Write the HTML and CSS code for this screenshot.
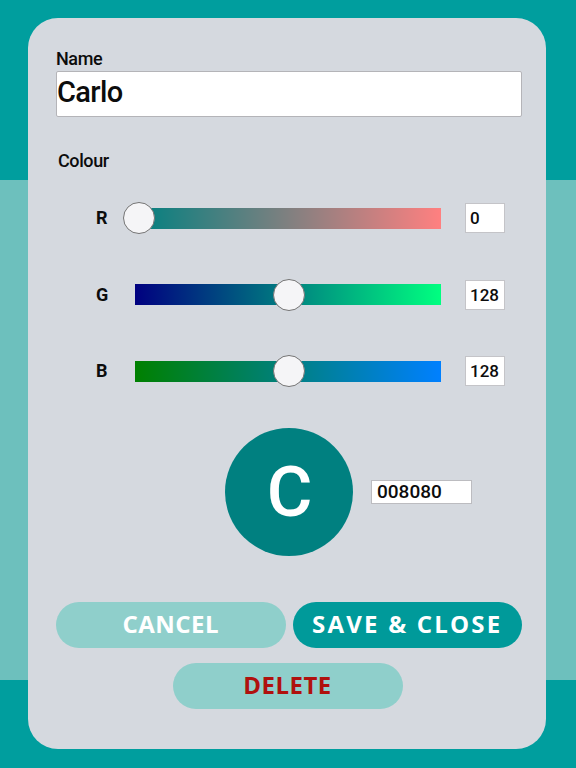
FILE: index.html
```html
<!DOCTYPE html>
<html>
<head>
<meta charset="utf-8">
<link rel="stylesheet" href="styles.css">
</head>
<body>
<div class="card">
  <div class="field-label">Name</div>
  <div class="name-input">Carlo</div>
  <div class="section-label">Colour</div>
  <div class="sliders">
    <div class="slider-row">
      <div class="ch-label">R</div>
      <div class="track track-r"><div class="thumb" style="left: 4px"></div></div>
      <div class="num-box">0</div>
    </div>
    <div class="slider-row">
      <div class="ch-label">G</div>
      <div class="track track-g"><div class="thumb" style="left: 153.6px"></div></div>
      <div class="num-box">128</div>
    </div>
    <div class="slider-row">
      <div class="ch-label">B</div>
      <div class="track track-b"><div class="thumb" style="left: 153.6px"></div></div>
      <div class="num-box">128</div>
    </div>
  </div>
  <div class="preview">
    <div class="swatch">C</div>
    <div class="hex-box">008080</div>
  </div>
  <div class="actions">
    <div class="btn btn-light">CANCEL</div>
    <div class="btn btn-dark">SAVE &amp; CLOSE</div>
  </div>
  <div class="delete-row">
    <div class="btn btn-light btn-delete">DELETE</div>
  </div>
</div>
</body>
</html>
```

FILE: styles.css
```css
html, body {
  margin: 0;
  padding: 0;
}
body {
  width: 576px;
  height: 768px;
  overflow: hidden;
  background: linear-gradient(to bottom, #009e9e 0, #009e9e 180px, #6dc0bd 180px, #6dc0bd 680px, #009e9e 680px, #009e9e 768px);
  font-family: Roboto, "Liberation Sans", sans-serif;
  color: #0c0c0c;
}
.card {
  box-sizing: border-box;
  width: 518px;
  margin: 18px 0 0 28px;
  padding: 31px 24px 40px 28px;
  background: #d5d9df;
  border-radius: 30px;
  display: flex;
  flex-direction: column;
}
.field-label,
.section-label {
  font-size: 18px;
  line-height: 20px;
  font-weight: 500;
  letter-spacing: -0.4px;
}
.section-label {
  margin-top: 34px;
  padding-left: 2px;
}
.name-input {
  box-sizing: border-box;
  margin-top: 2px;
  height: 46px;
  background: #fff;
  border: 1px solid #b4b4b8;
  border-radius: 2px;
  font-size: 29px;
  font-weight: 500;
  line-height: 40px;
  letter-spacing: -0.6px;
  padding: 0 0 4px 0;
}
.sliders {
  margin-top: 31px;
  display: flex;
  flex-direction: column;
  gap: 44.5px;
}
.slider-row {
  display: grid;
  grid-template-columns: 79px 306px 40px;
  align-items: center;
  height: 32px;
}
.ch-label {
  font-size: 18px;
  font-weight: 700;
  padding-left: 40px;
  line-height: 20px;
}
.track {
  position: relative;
  height: 21px;
}
.track-r { background: linear-gradient(to right, #008080, #ff8080); }
.track-g { background: linear-gradient(to right, #000080, #00ff80); }
.track-b { background: linear-gradient(to right, #008000, #0080ff); }
.thumb {
  position: absolute;
  top: 50%;
  width: 32px;
  height: 32px;
  box-sizing: border-box;
  border-radius: 50%;
  background: #f5f5f7;
  border: 1.5px solid #747474;
  transform: translate(-50%, -50%);
}
.num-box {
  box-sizing: border-box;
  margin-left: 24px;
  width: 40px;
  height: 30px;
  background: #fff;
  border: 1px solid #c4c4c8;
  font-size: 17px;
  font-weight: 500;
  line-height: 28px;
  padding-left: 4px;
}
.preview {
  margin-top: 41px;
  display: grid;
  grid-template-columns: 1fr 128px 1fr;
  align-items: center;
}
.swatch {
  grid-column: 2;
  width: 128px;
  height: 128px;
  border-radius: 50%;
  background: #008080;
  color: #fff;
  font-size: 70px;
  font-weight: 500;
  line-height: 128px;
  text-align: center;
  letter-spacing: -1px;
}
.hex-box {
  grid-column: 3;
  justify-self: start;
  margin-left: 18px;
  box-sizing: border-box;
  width: 101px;
  height: 24px;
  background: #fff;
  border: 1px solid #bcbcc0;
  font-size: 19px;
  line-height: 22px;
  padding-left: 5px;
  font-weight: 500;
}
.actions {
  margin-top: 46px;
  display: grid;
  grid-template-columns: 1fr 1fr;
  column-gap: 7px;
}
.btn {
  box-sizing: border-box;
  height: 46px;
  border-radius: 23px;
  display: flex;
  align-items: center;
  justify-content: center;
  padding-bottom: 3px;
  font-family: "Open Sans", "Liberation Sans", sans-serif;
  font-weight: 700;
  font-size: 24px;
  letter-spacing: 0.5px;
  color: #fff;
}
.btn-light { background: #8fcfcb; }
.btn-dark { background: #009a9a; letter-spacing: 2.2px; }
.delete-row {
  margin-top: 15px;
  display: flex;
  justify-content: center;
  padding-right: 3px;
}
.btn-delete {
  width: 230px;
  color: #b0110e;
  letter-spacing: 0.5px;
}
```
